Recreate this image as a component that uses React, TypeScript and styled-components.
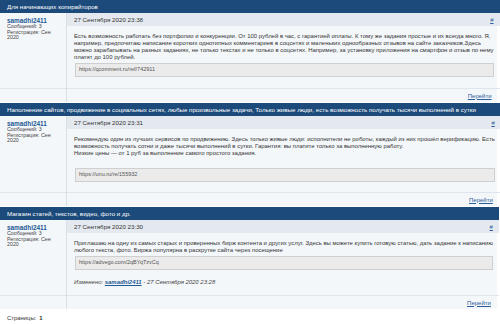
import styled, { createGlobalStyle } from 'styled-components';

const GlobalStyle = createGlobalStyle`
  html, body {
    margin: 0;
    padding: 0;
    background: #ffffff;
  }

  body {
    font-family: 'Liberation Sans', Arial, sans-serif;
    color: #222;
  }
`;

const Page = styled.div`
  width: 497px;
  display: flex;
  flex-direction: column;
  gap: 1px;
`;

const Post = styled.section`
  display: grid;
  grid-template-columns: 67px 1fr;
  grid-template-rows: 13px 13px auto 14px;
  background: #f4f7fa;
`;

const Category = styled.div`
  grid-column: 1 / -1;
  display: flex;
  align-items: center;
  padding-left: 7px;
  background: #1c4a7a;
  color: #fff;
  font-size: 6.2px;
  white-space: nowrap;
  overflow: hidden;
`;

const UserCell = styled.div`
  grid-row: 2 / 4;
  display: flex;
  flex-direction: column;
  padding: 4px 6px 0 7px;
  border-right: 1px solid #d9e0e8;
`;

const UserName = styled.a`
  color: #1d5a94;
  font-weight: bold;
  font-size: 6.4px;
  line-height: 7px;
  text-decoration: none;
`;

const UserMeta = styled.span`
  color: #444;
  font-size: 5.3px;
  line-height: 5.6px;
`;

const DateBar = styled.div`
  display: flex;
  align-items: center;
  justify-content: space-between;
  padding: 0 6px 0 7px;
  background: #e4e9ef;
  font-size: 6.2px;
  color: #333;
`;

const Anchor = styled.a`
  color: #2a5d99;
  font-size: 6px;
  text-decoration: underline;
`;

const Body = styled.div<{ $bottom: number }>`
  display: flex;
  flex-direction: column;
  padding: 7px 6px ${(p) => p.$bottom}px 7px;
  font-size: 5.95px;
  line-height: 7px;
  color: #333;
`;

const Line = styled.span`
  white-space: nowrap;
  min-height: 7px;
`;

const Code = styled.div<{ $top: number }>`
  margin: ${(p) => p.$top}px 0 0 1px;
  height: 14px;
  box-sizing: border-box;
  padding: 2px 3px 0;
  background: #ebebeb;
  border: 1px solid #cfcfcf;
  color: #555;
  font-size: 5.5px;
  line-height: 7px;
`;

const Edited = styled.div`
  margin-top: 9px;
  font-style: italic;
  color: #444;

  a {
    color: #1d5a94;
    font-weight: bold;
    text-decoration: underline;
  }
`;

const FooterLeft = styled.div`
  border-top: 1px solid #dfe5ec;
  border-right: 1px solid #d9e0e8;
`;

const FooterRight = styled.div`
  display: flex;
  align-items: center;
  justify-content: flex-end;
  padding-right: 8px;
  border-top: 1px solid #dfe5ec;
`;

const Pages = styled.div`
  padding: 4px 7px 0;
  font-size: 5.9px;
  line-height: 8px;
  color: #333;

  b {
    margin-left: 3px;
  }
`;

type PostData = {
  category: string;
  date: string;
  lines: string[];
  link: string;
  codeTop: number;
  bottom: number;
  edited?: string;
};

const posts: PostData[] = [
  {
    category: 'Для начинающих копирайторов',
    date: '27 Сентября 2020 23:38',
    lines: [
      'Есть возможность работать без портфолио и конкуренции. От 100 рублей в час, с гарантией оплаты. К тому же задания простые и их всегда много. Я,',
      'например, предпочитаю написание коротких однотипных комментариев в соцсетях и маленьких однообразных отзывов на сайте заказчиков.Здесь',
      'можно зарабатывать на разных заданиях, не только текстах и не только в соцсетях. Например, за установку приложения на смартфон и отзыв по нему',
      'платят до 100 рублей.',
    ],
    link: 'https://qcomment.ru/ref/742911',
    codeTop: 2,
    bottom: 11,
  },
  {
    category:
      'Наполнение сайтов, продвижение в социальных сетях, любые произвольные задачи, Только живые люди, есть возможность получать тысячи выполнений в сутки',
    date: '27 Сентября 2020 23:31',
    lines: [
      'Рекомендую один из лучших сервисов по продвижению. Здесь только живые люди: исполнители не роботы, каждый из них прошёл верификацию. Есть',
      'возможность получать сотни и даже тысячи выполнений в сутки. Гарантия: вы платите только за выполненную работу.',
      'Низкие цены — от 1 руб за выполнение самого простого задания.',
      '',
    ],
    link: 'https://unu.ru/re/155932',
    codeTop: 4,
    bottom: 10,
  },
  {
    category: 'Магазин статей, текстов, видео, фото и др.',
    date: '27 Сентября 2020 23:30',
    lines: [
      'Приглашаю на одну из самых старых и проверенных бирж контента и других услуг. Здесь вы можете купить готовую статью, дать задание к написанию',
      'любого текста, фото. Биржа популярна в раскрутке сайта через посещение',
    ],
    link: 'https://advego.com/2qBYqTzvCq',
    codeTop: 2,
    bottom: 9,
    edited: '27 Сентября 2020 23:28',
  },
];

const App = () => {
  return (
    <Page>
      <GlobalStyle />
      {posts.map((post) => (
        <Post key={post.date}>
          <Category>{post.category}</Category>
          <UserCell>
            <UserName href="#">samadhi2411</UserName>
            <UserMeta>Сообщений: 3</UserMeta>
            <UserMeta>Регистрация: Сен</UserMeta>
            <UserMeta>2020</UserMeta>
          </UserCell>
          <DateBar>
            <span>{post.date}</span>
            <Anchor href="#">#</Anchor>
          </DateBar>
          <Body $bottom={post.bottom}>
            {post.lines.map((line, i) => (
              <Line key={i}>{line}</Line>
            ))}
            <Code $top={post.codeTop}>{post.link}</Code>
            {post.edited && (
              <Edited>
                Изменено: <a href="#">samadhi2411</a> - {post.edited}
              </Edited>
            )}
          </Body>
          <FooterLeft />
          <FooterRight>
            <Anchor href="#">Перейти</Anchor>
          </FooterRight>
        </Post>
      ))}
      <Pages>
        Страницы:<b>1</b>
      </Pages>
    </Page>
  );
};

export default App;
